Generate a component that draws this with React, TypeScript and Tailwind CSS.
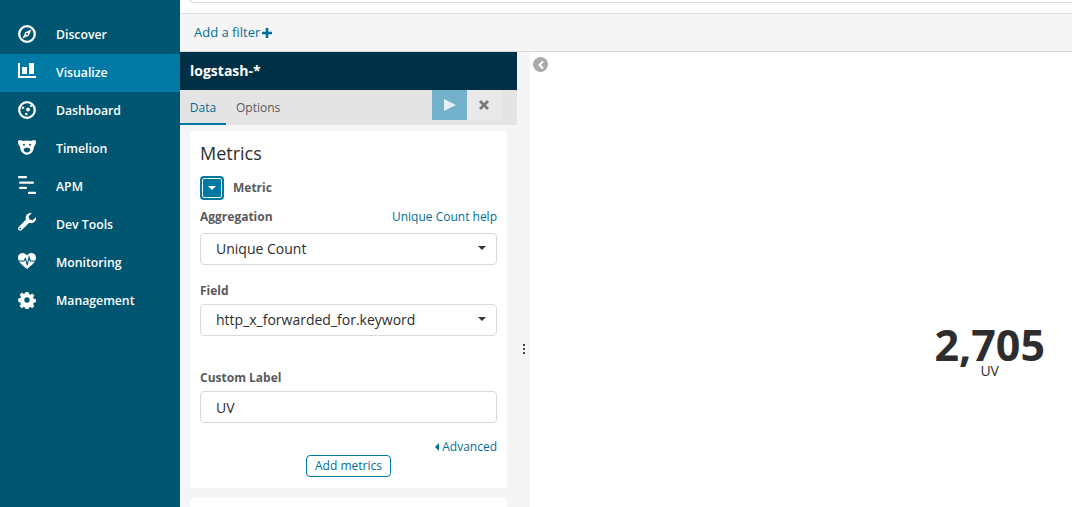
import { ChevronDown } from "lucide-react";

const navItems = [
  { label: "Discover", icon: <DiscoverIcon />, iconClass: "mb-[2px]" },
  { label: "Visualize", icon: <VisualizeIcon />, iconClass: "mb-[6px]", active: true },
  { label: "Dashboard", icon: <DashboardIcon />, iconClass: "mb-[2px]" },
  { label: "Timelion", icon: <TimelionIcon />, iconClass: "mb-[4px]" },
  { label: "APM", icon: <ApmIcon />, iconClass: "mb-[4px]" },
  { label: "Dev Tools", icon: <WrenchIcon />, iconClass: "mb-[6px]" },
  { label: "Monitoring", icon: <HeartIcon />, iconClass: "mb-[4px]" },
  { label: "Management", icon: <GearIcon />, iconClass: "mb-[2px]" },
];

function DiscoverIcon() {
  return (
    <svg viewBox="0 0 18 18" className="h-[18px] w-[18px]" fill="none">
      <circle cx="9" cy="9" r="7.800" stroke="white" strokeWidth="2.300" />
      <path fillRule="evenodd" d="M13.500 4.500 L10.700 10.700 L4.500 13.500 L7.300 7.300 Z M9 8 a1 1 0 1 0 0 2 a1 1 0 1 0 0 -2 Z" fill="white" />
    </svg>
  );
}

function VisualizeIcon() {
  return (
    <svg viewBox="0 0 18 15" className="h-[15px] w-[18px]" fill="white">
      <path d="M0 0h2v13h16v2H0z" />
      <rect x="4" y="4" width="5" height="7" />
      <rect x="11" y="0" width="5" height="11" />
    </svg>
  );
}

function DashboardIcon() {
  return (
    <svg viewBox="0 0 18 18" className="h-[18px] w-[18px]" fill="none">
      <circle cx="9" cy="9" r="7.800" stroke="white" strokeWidth="2.300" />
      <circle cx="5" cy="6.800" r="1.300" fill="white" />
      <circle cx="8.300" cy="13" r="1.300" fill="white" />
      <circle cx="10" cy="8.500" r="1.900" fill="white" />
      <circle cx="13" cy="5" r="1.100" fill="white" />
    </svg>
  );
}

function TimelionIcon() {
  return (
    <svg viewBox="0 0 18 15" className="h-[15px] w-[18px]" fill="white">
      <path
        fillRule="evenodd"
        d="M0 .8 C2 0 4 .2 5 1 C7.500 .3 10.500 .3 13 1 C14 .2 16 0 18 .8 C18 3.500 17.500 5.500 16 6.500 C16 10.500 13 14.800 9 14.800 C5 14.800 2 10.500 2 6.500 C.5 5.500 0 3.500 0 .8 Z M5 4.800 a1 1 0 1 0 2 0 a1 1 0 1 0 -2 0 Z M11 4.800 a1 1 0 1 0 2 0 a1 1 0 1 0 -2 0 Z M5.800 9 C7 7.300 11 7.300 12.200 9 C12.700 10.800 11 12.500 9 12.500 C7 12.500 5.300 10.800 5.800 9 Z"
      />
    </svg>
  );
}

function ApmIcon() {
  return (
    <svg viewBox="0 0 18 18" className="h-[18px] w-[18px]" fill="white">
      <rect x="0" y="0" width="9" height="2.200" rx="1" />
      <rect x="1" y="5.500" width="15" height="2.200" rx="1" />
      <rect x="1" y="10.700" width="8" height="2.200" rx="1" />
      <rect x="10" y="15.800" width="8" height="2.200" rx="1" />
    </svg>
  );
}

function WrenchIcon() {
  return (
    <svg viewBox="0 0 18 18" className="h-[18px] w-[18px]" fill="white">
      <path
        fillRule="evenodd"
        d="M17.800 4.300 L14.700 7.300 L11.500 6.500 L10.700 3.300 L13.700 .2 C11.500 -.4 9.200 .5 8.200 2.500 C7.500 3.900 7.500 5.400 8 6.600 L.7 13.900 C-.2 14.800 -.2 16.200 .7 17.100 C1.600 18 3 18 3.900 17.100 L11.200 9.800 C12.600 10.400 14.200 10.300 15.500 9.600 C17.500 8.500 18.400 6.400 17.800 4.300 Z M2.300 16.500 a.9 .9 0 1 1 0 -1.800 a.9 .9 0 1 1 0 1.800 Z"
      />
    </svg>
  );
}

function HeartIcon() {
  return (
    <svg viewBox="0 0 18 16" className="h-[16px] w-[18px]">
      <path
        fill="white"
        d="M9 16 C6 13.500 0 9.500 0 4.800 C0 2 2 0 4.700 0 C6.500 0 8 .9 9 2.400 C10 .9 11.500 0 13.300 0 C16 0 18 2 18 4.800 C18 9.500 12 13.500 9 16 Z"
      />
      <path d="M0 8H6L7.500 5.500L9.300 12L11 4L12.300 8H18" fill="none" stroke="#005571" strokeWidth="1.100" />
    </svg>
  );
}

function GearIcon() {
  return (
    <svg viewBox="0 0 18 18" className="h-[18px] w-[18px]" fill="white">
      <path
        fillRule="evenodd"
        d="M7.300 0h3.400l.5 2.500 1.500.6 2.100-1.400 2.400 2.400-1.400 2.100.6 1.500 2.500.5v3.400l-2.500.5-.6 1.500 1.400 2.100-2.400 2.400-2.100-1.400-1.500.6-.5 2.500H7.300l-.5-2.500-1.500-.6-2.100 1.400-2.400-2.400 1.400-2.100-.6-1.500L-.8 10.700V7.300l2.500-.5.600-1.500L.9 3.200 3.300.8l2.100 1.400 1.500-.6z M9 6a3 3 0 1 0 0 6a3 3 0 1 0 0-6z"
        transform="translate(.9 .9) scale(.9)"
      />
    </svg>
  );
}

function Caret({ className }: { className: string }) {
  return <span className={`block h-0 w-0 border-x-[4px] border-t-[4px] border-x-transparent ${className}`} />;
}

function Label({ children }: { children: string }) {
  return <span className="block text-[12px] font-bold leading-[16px] text-[#5a5a5a]">{children}</span>;
}

function SelectBox({ value }: { value: string }) {
  return (
    <div className="flex h-[32px] items-center justify-between rounded-[4px] border border-[#d9d9d9] bg-white pb-[2px] pl-[15px] pr-[10px] text-[14px] text-[#2d2d2d]">
      <span>{value}</span>
      <Caret className="border-t-[#333]" />
    </div>
  );
}

export default function App() {
  return (
    <div
      className="flex h-[507px] w-[1072px] overflow-hidden bg-white"
      style={{ fontFamily: '"Open Sans", sans-serif' }}
    >
      <aside className="flex w-[180px] shrink-0 flex-col bg-[#005571] pt-[16px]">
        {navItems.map((item) => (
          <div
            key={item.label}
            className={`flex h-[38px] items-center text-[12.25px] font-semibold text-white ${item.active ? "bg-[#0079a5]" : ""}`}
          >
            <span className={`flex w-[56px] justify-start pl-[18px] ${item.iconClass}`}>{item.icon}</span>
            <span>{item.label}</span>
          </div>
        ))}
      </aside>

      <main className="flex min-w-0 flex-1 flex-col">
        <div className="h-[14px] shrink-0 border-b border-[#e0e0e0] bg-white pl-[10px]">
          <div className="h-[3px] rounded-bl-[4px] border-b border-l border-[#d9d9d9]" />
        </div>
        <div className="flex h-[38px] shrink-0 items-center gap-[2px] border-b border-[#d9d9d9] bg-[#f5f5f5] pl-[14px] text-[13px] text-[#006e96]">
          <span>Add a filter</span>
          <svg viewBox="0 0 10 10" className="h-[10px] w-[10px]" fill="#006e96">
            <path d="M3.700 0h2.600v3.700H10v2.600H6.300V10H3.700V6.300H0V3.700h3.700z" />
          </svg>
        </div>

        <div className="flex min-h-0 flex-1">
          <section className="flex w-[337px] shrink-0 flex-col bg-[#f5f5f5]">
            <div className="flex h-[38px] shrink-0 items-center bg-[#003045] pb-[2px] pl-[10px] text-[14px] font-bold text-white">
              logstash-*
            </div>
            <div className="flex h-[35px] shrink-0 items-start bg-[#e4e4e4] text-[12px] text-[#5a5a5a]">
              <span className="flex h-[35px] w-[46px] items-center justify-center border-b-2 border-[#0079a5] pt-[2px] text-[#006e96]">
                Data
              </span>
              <span className="ml-[10px] flex h-[35px] items-center">Options</span>
              <span className="ml-auto flex h-[30px] w-[35px] items-center justify-center bg-[#73b0c9]">
                <svg viewBox="0 0 12 12" className="h-[12px] w-[12px]" fill="#e4eef3">
                  <path d="M0 0L12 6L0 12Z" />
                </svg>
              </span>
              <span className="mr-[15px] flex h-[30px] w-[35px] items-center justify-center bg-[#e9e9e9] pr-[2px]">
                <svg viewBox="0 0 10 10" className="h-[10px] w-[10px]" fill="#7a7a7a">
                  <path d="M2 0L5 3L8 0L10 2L7 5L10 8L8 10L5 7L2 10L0 8L3 5L0 2Z" />
                </svg>
              </span>
            </div>

            <div className="flex flex-col gap-[10px] px-[10px] pt-[6px]">
              <div className="rounded-[4px] bg-white px-[10px] pb-[11px] pt-[9px]">
                <h2 className="text-[18px] font-normal leading-[26px] text-[#2d2d2d]">Metrics</h2>
                <div className="mt-[10px] flex items-center gap-[9px]">
                  <span className="flex h-[24px] w-[24px] items-center justify-center rounded-[4px] border-2 border-[#0079a5] bg-[#0079a5] shadow-[inset_0_0_0_1px_#fff]">
                    <Caret className="border-t-white" />
                  </span>
                  <span className="text-[12px] font-bold text-[#5a5a5a]">Metric</span>
                </div>

                <div className="mt-[9px] flex items-center justify-between">
                  <Label>Aggregation</Label>
                  <span className="text-[12px] leading-[16px] text-[#006e96]">Unique Count help</span>
                </div>
                <div className="mt-[8px]">
                  <SelectBox value="Unique Count" />
                </div>

                <div className="mt-[18px]">
                  <Label>Field</Label>
                </div>
                <div className="mt-[5px]">
                  <SelectBox value="http_x_forwarded_for.keyword" />
                </div>

                <div className="mt-[34px]">
                  <Label>Custom Label</Label>
                </div>
                <div className="mt-[5px] flex h-[32px] items-center rounded-[4px] border border-[#d9d9d9] bg-white pl-[15px] text-[14px] text-[#2d2d2d]">
                  UV
                </div>

                <div className="mt-[16px] flex items-center justify-end gap-[3px] text-[12px] leading-[16px] text-[#006e96]">
                  <span className="h-0 w-0 border-y-[4px] border-r-[4px] border-y-transparent border-r-[#006e96]" />
                  Advanced
                </div>
                <div className="flex justify-center">
                  <span className="flex h-[22px] w-[85px] items-center justify-center rounded-[4px] border border-[#0079a5] text-[12px] text-[#006e96]">
                    Add metrics
                  </span>
                </div>
              </div>
              <div className="h-[20px] rounded-[4px] bg-white" />
            </div>
          </section>

          <div className="relative w-[13px] shrink-0 bg-[#f5f5f5]">
            <div className="absolute left-[6px] top-[292px] flex flex-col gap-[2px]">
              <span className="h-[2px] w-[2px] bg-[#444]" />
              <span className="h-[2px] w-[2px] bg-[#444]" />
              <span className="h-[2px] w-[2px] bg-[#444]" />
            </div>
          </div>

          <div className="relative flex-1 bg-white">
            <span className="absolute left-[3px] top-[5px] flex h-[15px] w-[15px] items-center justify-center rounded-full bg-[#aaa]">
              <ChevronDown className="h-[12px] w-[12px] rotate-90 text-white" strokeWidth={4} />
            </span>
            <div className="flex h-full flex-col items-end pr-[27px] pt-[274px]">
              <div className="flex flex-col items-center">
                <span className="text-[43px] font-bold leading-[38px] text-[#2d2d2d]">2,705</span>
                <span className="text-[14px] leading-[14px] text-[#2d2d2d]">UV</span>
              </div>
            </div>
          </div>
        </div>
      </main>
    </div>
  );
}
